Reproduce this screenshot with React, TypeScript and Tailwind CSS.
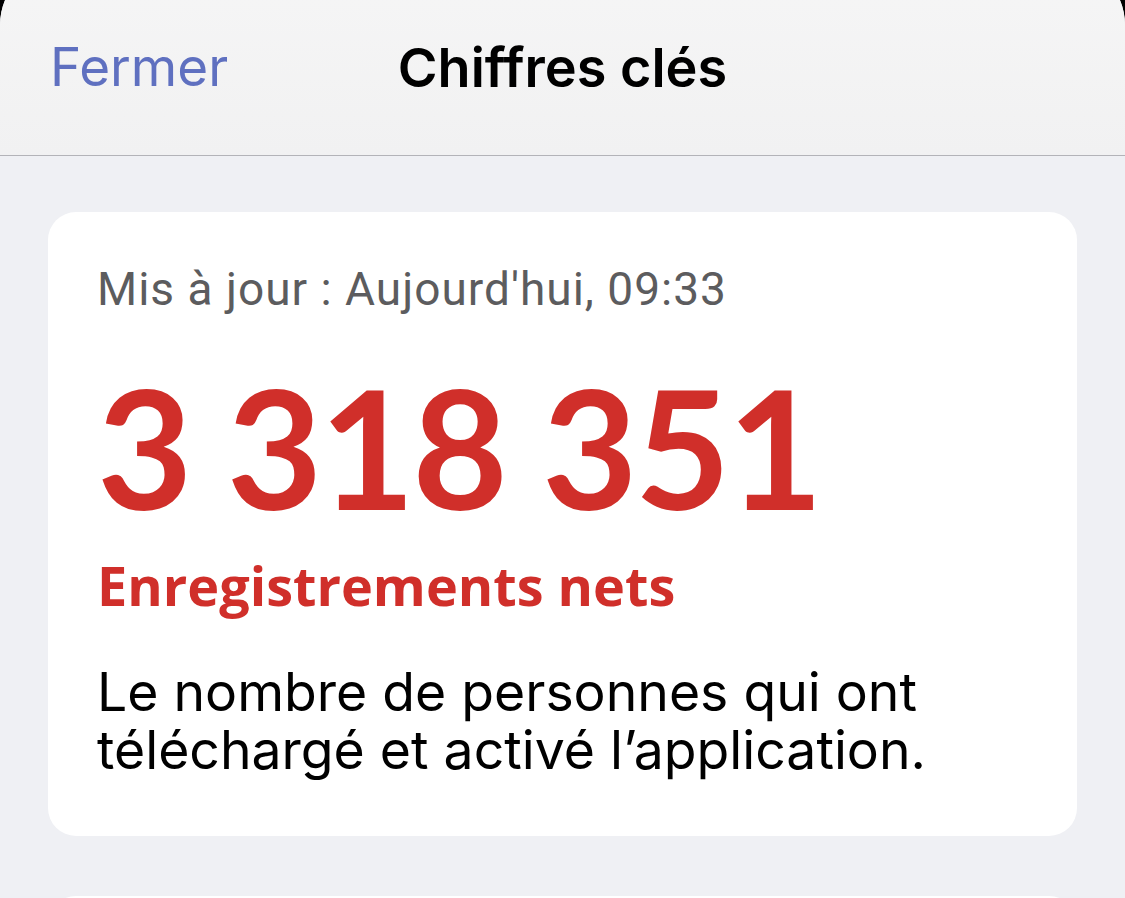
import React from "react";

// ----------------------------------------------------------------------

const sf = "font-['Inter','Liberation_Sans',sans-serif]";
const marianne = "font-['Lato','Open_Sans',sans-serif]";

function SheetHeader({ title, onClose }: { title: string; onClose?: () => void }) {
  return (
    <header className="h-[196px] border-b border-[#b3b3b8] bg-gradient-to-b from-[#f6f6f6] to-[#f1f1f2] pt-[80px]">
      <div className="grid h-[55px] grid-cols-[1fr_auto_1fr] items-center px-[50px]">
        <button
          onClick={onClose}
          className={`justify-self-start text-[53px] leading-[55px] text-[#5f70c0] ${sf}`}
        >
          Fermer
        </button>
        <h1 className={`text-[54px] font-semibold leading-[55px] text-black ${sf}`}>{title}</h1>
        <span />
      </div>
    </header>
  );
}

type KeyFigure = {
  updatedAt: string;
  value: string;
  label: string;
  description: string;
};

function KeyFigureCard({ figure }: { figure: KeyFigure }) {
  return (
    <section className="rounded-[28px] bg-white px-[49px] pt-[55px] pb-[57px]">
      <p className="font-['Roboto','Liberation_Sans',sans-serif] text-[46px] leading-[44px] tracking-[1px] text-[#5c5c5e]">
        {figure.updatedAt}
      </p>
      <p className={`mt-[53px] text-[165px] font-bold leading-[165px] tracking-[-3px] text-[#d02f2a] ${marianne}`}>
        {figure.value}
      </p>
      <h2 className="mt-[26px] font-['Open_Sans','Lato',sans-serif] text-[54px] font-bold leading-[60px] text-[#d02f2a]">
        {figure.label}
      </h2>
      <p className={`mt-[48px] max-w-[900px] text-[53.5px] leading-[58px] text-black ${sf}`}>
        {figure.description}
      </p>
    </section>
  );
}

export default function App() {
  const figure: KeyFigure = {
    updatedAt: "Mis à jour : Aujourd'hui, 09:33",
    value: "3 318 351",
    label: "Enregistrements nets",
    description: "Le nombre de personnes qui ont téléchargé et activé l’application.",
  };

  return (
    <div className="h-[898px] overflow-hidden bg-black">
      <div className="-mt-[40px] h-[938px] overflow-hidden rounded-t-[65px] bg-[#eff0f4]">
        <SheetHeader title="Chiffres clés" />
        <div className="flex flex-col gap-[60px] px-[48px] pt-[56px]">
          <KeyFigureCard figure={figure} />
          <section className="h-[200px] rounded-[28px] bg-white" />
        </div>
      </div>
    </div>
  );
}
